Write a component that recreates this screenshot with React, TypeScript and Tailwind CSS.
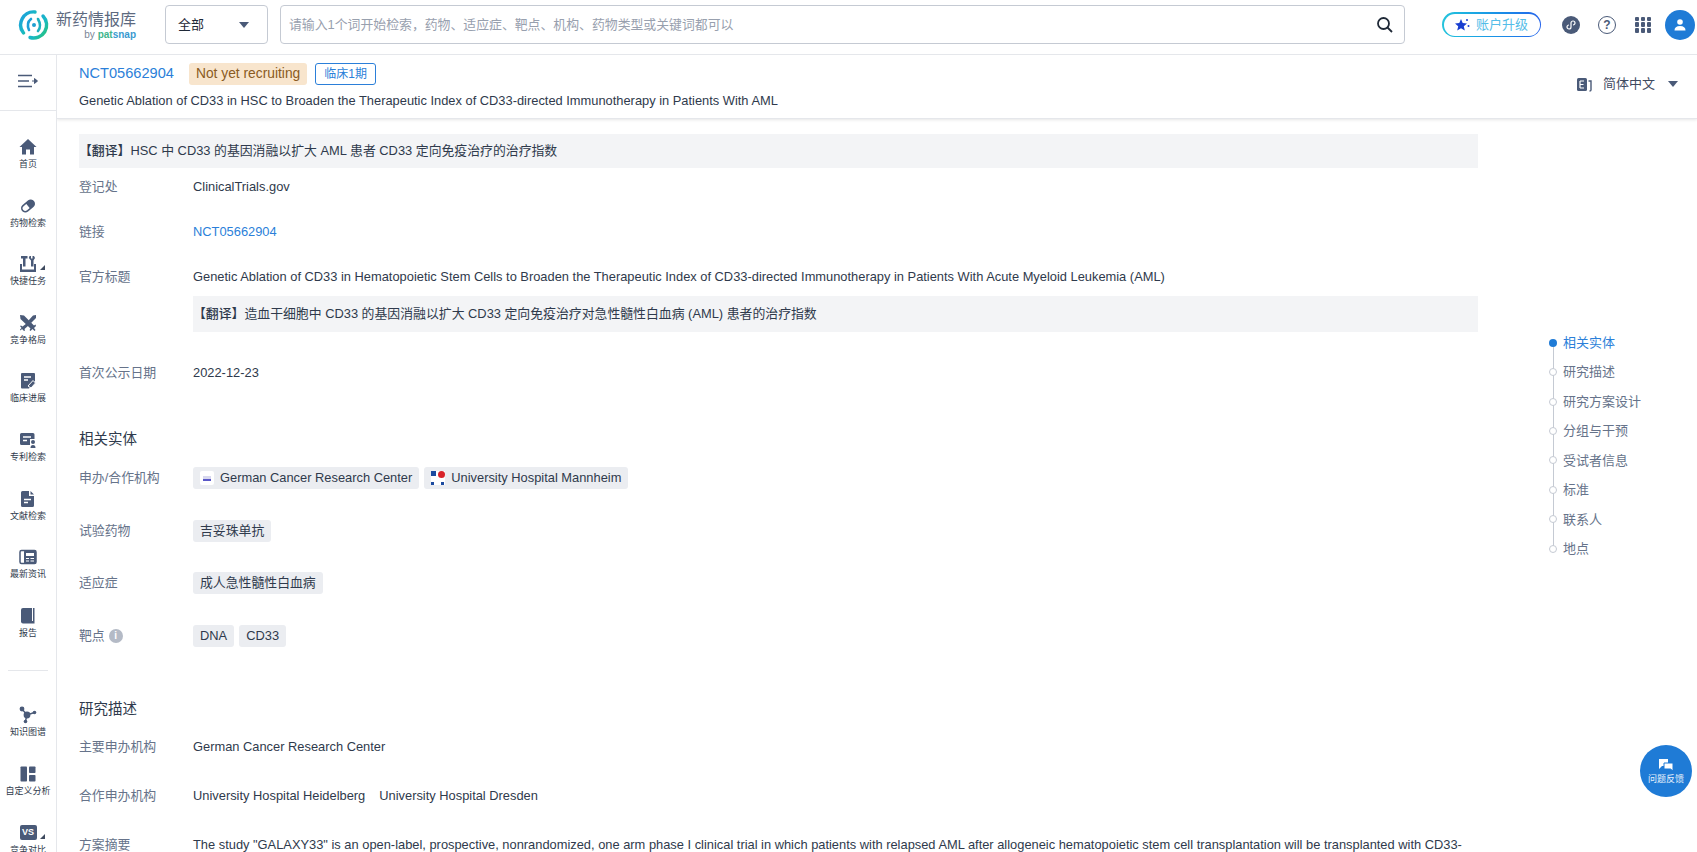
import React from 'react';

const FONT = '"Liberation Sans", "Noto Sans CJK SC", sans-serif';

const navItems = [
  { label: '首页', icon: 'home' },
  { label: '药物检索', icon: 'pill' },
  { label: '快捷任务', icon: 'task', more: true },
  { label: '竞争格局', icon: 'sword' },
  { label: '临床进展', icon: 'clinic' },
  { label: '专利检索', icon: 'patent' },
  { label: '文献检索', icon: 'doc' },
  { label: '最新资讯', icon: 'news' },
  { label: '报告', icon: 'book' },
];

const navItems2 = [
  { label: '知识图谱', icon: 'graph' },
  { label: '自定义分析', icon: 'layout' },
  { label: '竞争对比', icon: 'vs', more: true },
];

const anchors = ['相关实体', '研究描述', '研究方案设计', '分组与干预', '受试者信息', '标准', '联系人', '地点'];

const NavIcon = ({ name }: { name: string }) => {
  const c = '#4a5a78';
  switch (name) {
    case 'home':
      return <svg width="18" height="18" viewBox="0 0 18 18"><path d="M9 1 L17.5 9 H15 V16.5 H11 V11.5 H7 V16.5 H3 V9 H0.5 Z" fill={c} /></svg>;
    case 'pill':
      return <svg width="18" height="18" viewBox="0 0 18 18"><g transform="rotate(-40 9 9)"><rect x="2" y="5.5" width="14" height="7" rx="3.5" fill="none" stroke={c} strokeWidth="1.6" /><path d="M9 5.5 H12.5 A3.5 3.5 0 0 1 12.5 12.5 H9 Z" fill={c} /></g></svg>;
    case 'task':
      return <svg width="18" height="18" viewBox="0 0 18 18"><path d="M1 9 H3 V14.5 H15 V9 H17 V17 H1 Z" fill={c} /><path d="M2 1 H8.5 V3.5 H6.5 V11.5 H4 V3.5 H2 Z" fill={c} /><path d="M10.5 1 L12 1 V3.5 H13.5 V1 H15 L16 3 L14.5 5.5 V11.5 H12 V5.5 L9.8 3 Z" fill={c} /></svg>;
    case 'sword':
      return <svg width="18" height="18" viewBox="0 0 18 18"><path d="M1 1 L5 1.5 L15 11.5 L16.5 10.5 L17 12 L15 14 L16.5 16 L15.5 17 L13.5 15 L11.5 17 L10.5 16 L11.5 14.5 L1.5 5 Z" fill={c} /><path d="M17 1 L17 4 L12 9 L9.5 6.5 L14 1.5 Z M7.5 9.5 L9.5 11.5 L5.5 15 L6 16.5 L5 17 L3 15 L1.5 16.5 L1 15.5 L2.5 14 L1 12 L2 11.5 L3.5 12.5 Z" fill={c} /></svg>;
    case 'clinic':
      return <svg width="18" height="18" viewBox="0 0 18 18"><path d="M3 1 H15 Q16 1 16 2 V9 L10 16.5 H3 Q2 16.5 2 15.5 V2 Q2 1 3 1 Z" fill={c} /><path d="M5 5 H12 M5 8 H9" stroke="#fff" strokeWidth="1.4" /><path d="M9 14 L14 8.5 L16.5 11 L12 16 Z" fill={c} stroke="#fff" strokeWidth="1" /></svg>;
    case 'patent':
      return <svg width="18" height="18" viewBox="0 0 18 18"><path d="M2.5 2 H14 Q15.5 2 15.5 3.5 V8 H11 V14 H2.5 Q1 14 1 12.5 V3.5 Q1 2 2.5 2 Z" fill={c} /><path d="M4 6 H12 M4 9.5 H8" stroke="#fff" strokeWidth="1.5" /><circle cx="14" cy="11" r="2" fill={c} /><path d="M11.5 17 Q11.5 14 14 14 Q16.5 14 16.5 17 Z" fill={c} /></svg>;
    case 'doc':
      return <svg width="18" height="18" viewBox="0 0 18 18"><path d="M3.5 1 H10 V6 H15 V15.5 Q15 17 13.5 17 H3.5 Q2 17 2 15.5 V2.5 Q2 1 3.5 1 Z M11.5 1 L15 4.5 H11.5 Z" fill={c} /><path d="M5 9.5 H12 M5 12.5 H9" stroke="#fff" strokeWidth="1.5" /></svg>;
    case 'news':
      return <svg width="18" height="18" viewBox="0 0 18 18"><rect x="1" y="2.5" width="16" height="13" rx="1.5" fill="none" stroke={c} strokeWidth="1.5" /><rect x="5" y="2.5" width="12" height="13" rx="1" fill={c} /><rect x="7" y="5" width="8" height="3" fill="#fff" /><path d="M7 10.5 H10 M7 13 H10 M11.5 10.5 H15 M11.5 13 H15" stroke="#fff" strokeWidth="1.1" /></svg>;
    case 'book':
      return <svg width="18" height="18" viewBox="0 0 18 18"><path d="M4 1 H15.5 V16.5 H4 Q2 16.5 2 14.5 V3 Q2 1 4 1 Z" fill={c} /><path d="M13.5 1 V14" stroke="#fff" strokeWidth="1" /></svg>;
    case 'graph':
      return <svg width="18" height="18" viewBox="0 0 18 18"><path d="M3 3 L8 9 L15.5 6.5 M8 9 L6.5 15" stroke={c} strokeWidth="1.4" fill="none" /><circle cx="3" cy="3" r="2.4" fill={c} /><circle cx="8" cy="9" r="3.4" fill={c} /><circle cx="15.5" cy="6.5" r="1.8" fill={c} /><circle cx="6.5" cy="15.5" r="1.8" fill={c} /></svg>;
    case 'layout':
      return <svg width="18" height="18" viewBox="0 0 18 18"><rect x="1.5" y="1.5" width="6.5" height="15" rx="0.8" fill={c} /><rect x="10" y="1.5" width="6.5" height="6.5" rx="0.8" fill={c} /><rect x="10" y="10" width="6.5" height="6.5" rx="0.8" fill={c} /></svg>;
    case 'vs':
      return <div className="w-[17px] h-[15px] rounded-[2px] bg-[#4a5a78] text-white text-[9px] leading-[15px] font-bold text-center">VS</div>;
    default:
      return null;
  }
};

const SideItem = ({ label, icon, more }: { label: string; icon: string; more?: boolean }) => (
  <div className="relative h-[58.6px] flex flex-col items-center justify-start">
    <div className="h-[18px] flex items-center justify-center"><NavIcon name={icon} /></div>
    <div className="mt-[2px] text-[9px] leading-[12px] text-[#2f3a4c] whitespace-nowrap">{label}</div>
    {more && <div className="absolute left-[40px] top-[10px] w-0 h-0 border-l-[5px] border-l-transparent border-b-[5px] border-b-[#3f4a5f]" />}
  </div>
);

const Sidebar = () => (
  <aside className="w-[57px] shrink-0 border-r border-[#e5e7eb] bg-white flex flex-col overflow-hidden">
    <div className="h-[56px] shrink-0 border-b border-[#e5e7eb] pb-[4px] flex items-center justify-center">
      <svg width="20" height="14" viewBox="0 0 20 14">
        <path d="M0 1.5 H14 M0 7 H11 M0 12.5 H14" stroke="#4a5a78" strokeWidth="1.6" />
        <path d="M14 7 H19 M16.5 4.5 L19.5 7 L16.5 9.5 Z" stroke="#4a5a78" strokeWidth="1" fill="#4a5a78" />
      </svg>
    </div>
    <div className="pt-[27px]">
      {navItems.map((n) => <SideItem key={n.label} {...n} />)}
    </div>
    <div className="mx-[8px] mt-[5px] mb-[35px] h-px shrink-0 bg-[#e5e7eb]" />
    <div>
      {navItems2.map((n) => <SideItem key={n.label} {...n} />)}
    </div>
  </aside>
);

const Logo = () => (
  <svg width="32" height="32" viewBox="0 0 32 32" fill="none">
    <defs>
      <linearGradient id="logoRing" x1="0" y1="0" x2="1" y2="1">
        <stop offset="0" stopColor="#1e9be0" />
        <stop offset="0.55" stopColor="#18b9c4" />
        <stop offset="1" stopColor="#2ac46f" />
      </linearGradient>
    </defs>
    <path d="M17 3 A13 13 0 0 0 5.5 24" stroke="url(#logoRing)" strokeWidth="3.4" strokeLinecap="round" />
    <path d="M25 7 A13 13 0 0 1 12 28.5" stroke="url(#logoRing)" strokeWidth="3.4" strokeLinecap="round" />
    <path d="M13 10 Q8 14 11 21" stroke="#1c9fd8" strokeWidth="2.6" strokeLinecap="round" />
    <path d="M20 10 Q24 17 20 22" stroke="#1cb0c0" strokeWidth="2.6" strokeLinecap="round" />
    <circle cx="16" cy="16" r="2" fill="#1f9fd0" />
  </svg>
);

const TopBar = () => (
  <header className="h-[55px] shrink-0 border-b border-[#e5e7eb] bg-white flex items-center pl-[18px] pr-[1px] pb-[5px]">
    <Logo />
    <div className="ml-[6px] w-[80px] flex flex-col items-end">
      <div className="text-[16px] leading-[20px] text-[#5d6a80] whitespace-nowrap">新药情报库</div>
      <div className="text-[10px] leading-[10px] text-[#7a8596] whitespace-nowrap">by <span className="text-[#3fb58c] font-semibold">pat</span><span className="text-[#3a9ad0] font-semibold">snap</span></div>
    </div>
    <div className="ml-[29px] w-[103px] h-[39px] border border-[#c5cad3] rounded-[4px] flex items-center justify-between pl-[12px] pr-[18px]">
      <span className="text-[13px] text-[#1f2937]">全部</span>
      <div className="w-0 h-0 border-x-[5px] border-x-transparent border-t-[6px] border-t-[#4a5a78]" />
    </div>
    <div className="ml-[12px] w-[1125px] h-[39px] border border-[#c5cad3] rounded-[4px] flex items-center justify-between pl-[8px] pr-[10px]">
      <span className="text-[12.86px] text-[#98a0ae]">请输入1个词开始检索，药物、适应症、靶点、机构、药物类型或关键词都可以</span>
      <svg width="18" height="18" viewBox="0 0 18 18" fill="none"><circle cx="7.5" cy="7.5" r="5.5" stroke="#1f2937" strokeWidth="1.8" /><path d="M11.5 11.5 L16 16" stroke="#1f2937" strokeWidth="1.8" /></svg>
    </div>
    <div className="ml-[37px] w-[99px] h-[25px] rounded-full bg-gradient-to-r from-[#25c4dc] to-[#2563eb] p-[1.5px]">
      <div className="w-full h-full rounded-full bg-white flex items-center justify-center gap-[6px]">
        <svg width="15" height="14" viewBox="0 0 15 14"><path d="M6 1 L7.7 5 L12 5.4 L8.8 8.2 L9.8 12.5 L6 10.2 L2.2 12.5 L3.2 8.2 L0 5.4 L4.3 5 Z" fill="#1a3fd0" /><circle cx="12" cy="2" r="1" fill="#1a3fd0" /><circle cx="13.5" cy="8" r="1" fill="#1a3fd0" /></svg>
        <span className="text-[13px] leading-none text-[#55bde8]">账户升级</span>
      </div>
    </div>
    <div className="ml-[21px] w-[18px] h-[18px] rounded-full bg-[#4a5a78] flex items-center justify-center">
      <svg width="12" height="12" viewBox="0 0 12 12" fill="none"><path d="M6 4 V8 A2 2 0 1 1 4 6 M6 8 V4 A2 2 0 1 1 8 6" stroke="#fff" strokeWidth="1.2" /></svg>
    </div>
    <div className="ml-[18px] w-[18px] h-[18px] rounded-full border-[1.6px] border-[#4a5a78] flex items-center justify-center text-[12px] leading-none font-semibold text-[#4a5a78]">?</div>
    <div className="ml-[19px] w-[16px] h-[16px] grid grid-cols-3 gap-[1.5px]">
      {Array.from({ length: 9 }).map((_, i) => <div key={i} className="bg-[#4a5a78] rounded-[1px]" />)}
    </div>
    <div className="ml-[14px] w-[30px] h-[30px] rounded-full bg-[#1f7bd6] flex items-center justify-center">
      <svg width="14" height="14" viewBox="0 0 14 14"><circle cx="7" cy="4" r="2.8" fill="#fff" /><path d="M1.5 12.5 Q1.5 8 7 8 Q12.5 8 12.5 12.5 Z" fill="#fff" /></svg>
    </div>
  </header>
);

const SubHeader = () => (
  <div className="h-[64px] shrink-0 bg-white border-b border-[#e5e7eb] shadow-[0_1px_3px_rgba(0,0,0,0.1)] flex justify-between pl-[22px] pr-[19px] relative z-10">
    <div>
      <div className="h-[22px] mt-[8px] flex items-center">
        <span className="text-[14.6px] text-[#2b7fd9]">NCT05662904</span>
        <span className="ml-[15px] h-[22px] px-[7px] rounded-[3px] bg-[#f8e5cd] text-[#8a5b22] text-[13.8px] leading-[22px]">Not yet recruiting</span>
        <span className="ml-[8px] h-[22px] px-[8px] rounded-[3px] border border-[#2b7fd9] text-[#2b7fd9] text-[12px] leading-[20px]">临床1期</span>
      </div>
      <div className="mt-[7px] text-[12.86px] leading-[18px] text-[#2f3a4c] whitespace-nowrap">Genetic Ablation of CD33 in HSC to Broaden the Therapeutic Index of CD33-directed Immunotherapy in Patients With AML</div>
    </div>
    <div className="flex items-center gap-[8px] mt-[19px] self-start h-[20px]">
      <svg width="15" height="15" viewBox="0 0 15 15"><rect x="0" y="1" width="10" height="13" rx="1.5" fill="#4a5a78" /><path d="M3 4 H7 M3 7.5 H6.5 M3 11 H7 M3 4 V11" stroke="#fff" strokeWidth="1.2" /><path d="M11.5 4 H14 V13 Q14 14 12.5 14" stroke="#4a5a78" strokeWidth="1.4" fill="none" /></svg>
      <span className="ml-[3px] text-[13px] text-[#3f4a5f]">简体中文</span>
      <div className="ml-[5px] w-0 h-0 border-x-[5px] border-x-transparent border-t-[6px] border-t-[#4a5a78]" />
    </div>
  </div>
);

const Field = ({ label, children, className }: { label: React.ReactNode; children: React.ReactNode; className?: string }) => (
  <div className={'flex items-start ' + (className ?? '')}>
    <div className="w-[114px] shrink-0 text-[12.86px] leading-[22px] text-[#66738a]">{label}</div>
    <div className="text-[12.86px] leading-[22px] text-[#2f3a4c] min-w-0 whitespace-nowrap">{children}</div>
  </div>
);

const Pill = ({ children }: { children: React.ReactNode }) => (
  <div className="h-[22px] px-[7px] rounded-[3px] bg-[#ebedf1] flex items-center gap-[6px] text-[12.86px] text-[#2f3a4c] whitespace-nowrap">{children}</div>
);

const Content = () => (
  <div className="w-[1421px] shrink-0 pt-[15px] pl-[22px]">
    <div className="h-[34px] bg-[#f3f4f6] text-[12.86px] leading-[34px] text-[#2f3a4c]"><span className="font-medium">【翻译】</span>HSC 中 CD33 的基因消融以扩大 AML 患者 CD33 定向免疫治疗的治疗指数</div>
    <Field label="登记处" className="mt-[8px]">ClinicalTrials.gov</Field>
    <Field label="链接" className="mt-[23px]"><span className="text-[#2b7fd9]">NCT05662904</span></Field>
    <Field label="官方标题" className="mt-[23px]">Genetic Ablation of CD33 in Hematopoietic Stem Cells to Broaden the Therapeutic Index of CD33-directed Immunotherapy in Patients With Acute Myeloid Leukemia (AML)</Field>
    <div className="ml-[114px] mt-[8px] h-[36px] bg-[#f3f4f6] text-[12.86px] leading-[36px] text-[#2f3a4c]"><span className="font-medium">【翻译】</span>造血干细胞中 CD33 的基因消融以扩大 CD33 定向免疫治疗对急性髓性白血病 (AML) 患者的治疗指数</div>
    <Field label="首次公示日期" className="mt-[30px]">2022-12-23</Field>
    <h2 className="mt-[44px] text-[14.5px] leading-[22px] font-normal text-[#2f3a4c]">相关实体</h2>
    <Field label="申办/合作机构" className="mt-[17px]">
      <div className="flex gap-[5px]">
        <Pill>
          <span className="w-[14px] h-[14px] rounded-[2px] bg-white flex items-center justify-center"><span className="w-[8px] h-[5px] border-b-2 border-b-[#5a58c8] bg-[#d8d8ee]" /></span>
          German Cancer Research Center
        </Pill>
        <Pill>
          <span className="w-[14px] h-[14px] bg-white relative">
            <span className="absolute left-0 top-0 w-[5px] h-[5px] bg-[#1c4ba0]" />
            <span className="absolute right-0 top-0 w-[7px] h-[7px] rounded-full bg-[#d8232a]" />
            <span className="absolute left-0 bottom-0 w-[3px] h-[3px] bg-[#1c4ba0]" />
            <span className="absolute right-[1px] bottom-0 w-[3px] h-[3px] bg-[#1c4ba0]" />
          </span>
          University Hospital Mannheim
        </Pill>
      </div>
    </Field>
    <Field label="试验药物" className="mt-[30.5px]"><div className="flex gap-[5px]"><Pill>吉妥珠单抗</Pill></div></Field>
    <Field label="适应症" className="mt-[30.5px]"><div className="flex gap-[5px]"><Pill>成人急性髓性白血病</Pill></div></Field>
    <Field
      label={<span className="flex items-center gap-[4px]">靶点<span className="w-[14px] h-[14px] rounded-full bg-[#b4bac6] text-white text-[10px] leading-[14px] text-center font-bold">i</span></span>}
      className="mt-[30.5px]"
    >
      <div className="flex gap-[5px]"><Pill>DNA</Pill><Pill>CD33</Pill></div>
    </Field>
    <h2 className="mt-[51px] text-[14.5px] leading-[22px] font-normal text-[#2f3a4c]">研究描述</h2>
    <Field label="主要申办机构" className="mt-[16px]">German Cancer Research Center</Field>
    <Field label="合作申办机构" className="mt-[27px]">
      <span>University Hospital Heidelberg</span><span className="ml-[14px]">University Hospital Dresden</span>
    </Field>
    <Field label="方案摘要" className="mt-[27px]">The study "GALAXY33" is an open-label, prospective, nonrandomized, one arm phase I clinical trial in which patients with relapsed AML after allogeneic hematopoietic stem cell transplantation will be transplanted with CD33-</Field>
  </div>
);

const AnchorNav = () => (
  <div className="ml-[71px] mt-[209px] shrink-0">
    {anchors.map((a, i) => (
      <div key={a} className="relative h-[29.45px] flex items-center pl-[14px]">
        {i < anchors.length - 1 && <div className="absolute left-[3.5px] top-[14px] h-[30px] w-px bg-[#c5cad3]" />}
        <div className={i === 0 ? 'absolute left-0 w-[8px] h-[8px] rounded-full bg-[#1f7bd6]' : 'absolute left-0 w-[8px] h-[8px] rounded-full bg-white border border-[#c5cad3]'} />
        <span className={i === 0 ? 'text-[13px] text-[#2b7fd9]' : 'text-[13px] text-[#66738a]'}>{a}</span>
      </div>
    ))}
  </div>
);

export default function App() {
  return (
    <div className="relative h-[852px] w-[1697px] overflow-hidden bg-white flex flex-col" style={{ fontFamily: FONT }}>
      <TopBar />
      <div className="flex flex-1 min-h-0">
        <Sidebar />
        <main className="flex-1 min-w-0 flex flex-col overflow-hidden">
          <SubHeader />
          <div className="flex flex-1 min-h-0 overflow-hidden">
            <Content />
            <AnchorNav />
          </div>
        </main>
      </div>
      <div className="absolute left-[1640px] top-[745px] w-[52px] h-[52px] rounded-full bg-[#1f7bd6] flex flex-col items-center justify-center">
        <svg width="16" height="14" viewBox="0 0 16 14"><path d="M1 1 H10 V8 H4 L1 11 Z" fill="#fff" /><path d="M6 5 H15 V11 L15 13 L12.5 11 H6 Z" fill="#fff" stroke="#1f7bd6" strokeWidth="1" /></svg>
        <span className="mt-[2px] text-[9px] leading-[11px] text-white/90">问题反馈</span>
      </div>
    </div>
  );
}
